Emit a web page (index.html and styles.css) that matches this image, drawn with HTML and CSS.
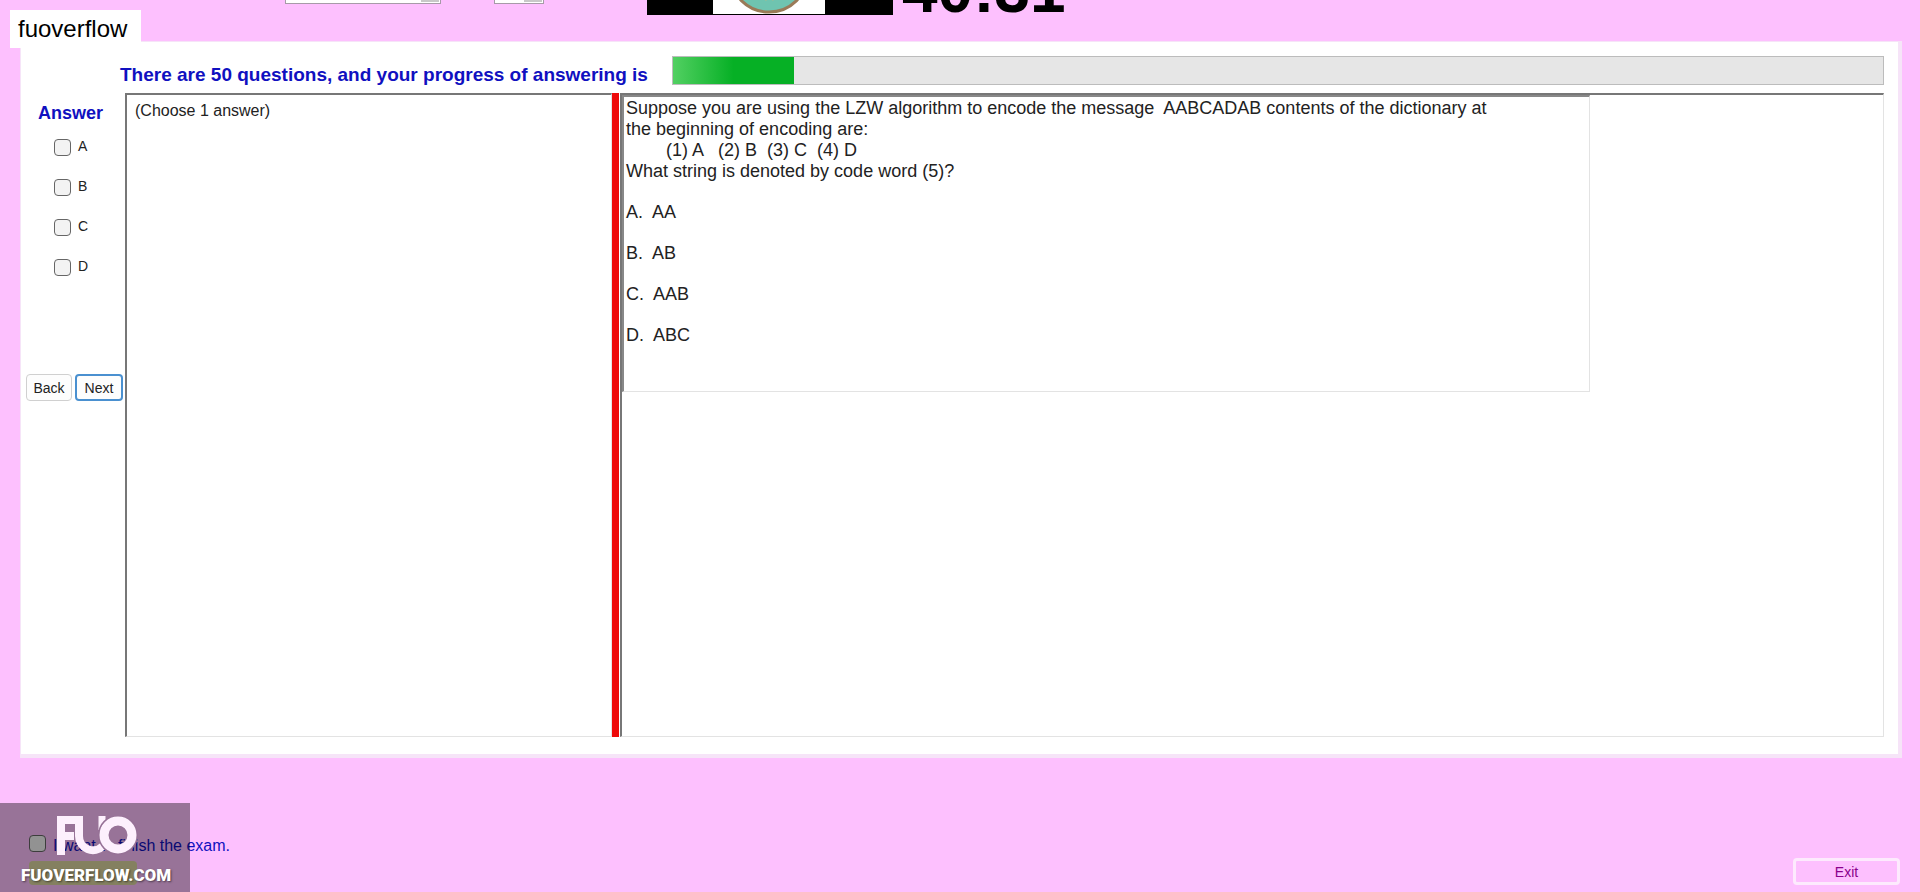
FILE: index.html
```html
<!DOCTYPE html>
<html lang="en">
<head>
  <meta charset="UTF-8">
  <meta name="viewport" content="width=device-width, initial-scale=1.0">
  <title>fuoverflow</title>
  <link rel="stylesheet" href="styles.css">
</head>
<body>

  <!-- Top bar, scrolled mostly out of view -->
  <header class="topbar">
    <select class="font-select" aria-label="Font"><option></option></select>
    <select class="size-select" aria-label="Size"><option></option></select>
    <div class="banner">
      <svg class="banner-seal" viewBox="0 0 112 63" aria-hidden="true">
        <rect width="112" height="63" fill="#fff"/>
        <circle cx="56" cy="22" r="39" fill="#6fc4b0" stroke="#9a7a58" stroke-width="3"/>
        <path d="M48 45l5 5 3-4 4 4 4-6z" fill="#a9b98c"/>
      </svg>
    </div>
    <div class="timer">40:31</div>
  </header>

  <div class="tag">fuoverflow</div>

  <!-- Exam panel -->
  <main class="panel">
    <div class="progress-row">
      <span class="progress-label">There are 50 questions, and your progress of answering is</span>
      <div class="progress"><div class="progress-fill" style="width: 10%"></div></div>
    </div>

    <div class="exam">
      <div class="answers">
        <h2>Answer</h2>
        <label><input type="checkbox">A</label>
        <label><input type="checkbox">B</label>
        <label><input type="checkbox">C</label>
        <label><input type="checkbox">D</label>
        <div class="nav-buttons">
          <button type="button">Back</button>
          <button type="button" class="next">Next</button>
        </div>
      </div>

      <div class="note-pane">(Choose 1 answer)</div>
      <div class="splitter"></div>

      <div class="question-pane">
        <div class="question">
          <p>Suppose you are using the LZW algorithm to encode the message  AABCADAB contents of the dictionary at
the beginning of encoding are:
        (1) A   (2) B  (3) C  (4) D
What string is denoted by code word (5)?</p>
          <p class="option">A.  AA</p>
          <p class="option">B.  AB</p>
          <p class="option">C.  AAB</p>
          <p class="option">D.  ABC</p>
        </div>
      </div>
    </div>
  </main>

  <footer class="footer">
    <div class="finish">
      <label><input type="checkbox">I want to finish the exam.</label>
      <button type="button" class="finish-button" aria-label="Finish"></button>
    </div>
    <button type="button" class="exit">Exit</button>
  </footer>

  <!-- Watermark -->
  <div class="watermark">
    <svg class="logo" viewBox="0 0 82 40" aria-hidden="true">
      <g fill="none" stroke="#fdf0fd">
        <path d="M5 39V4H19M5 20H18" stroke-width="8"/>
        <path d="M23 0V20a14 14 0 0 0 24 10" stroke-width="8"/>
        <path d="M46 0V14" stroke-width="7"/>
        <circle cx="62" cy="19" r="19" stroke="#967196" stroke-width="2"/>
        <circle cx="62" cy="19" r="14" stroke-width="9"/>
      </g>
    </svg>
    <div class="site">FUOVERFLOW.COM</div>
  </div>

</body>
</html>
```

FILE: styles.css
```css
* {
  box-sizing: border-box;
}
body {
  margin: 0;
  height: 100vh;
  display: flex;
  flex-direction: column;
  overflow: hidden;
  background-color: #fdc0fe;
  color: #222;
  font-family: "Liberation Sans", Arial, sans-serif;
  font-size: 16px;
}
button, select {
  font-family: inherit;
}

/* Top bar */
.topbar {
  height: 41px;
  padding-left: 285px;
  padding-bottom: 26px;
  display: flex;
  align-items: flex-end;
}
.font-select, .size-select {
  appearance: none;
  height: 24px;
  margin-bottom: 11px;
  border: 1px solid #a79aa8;
  border-radius: 0;
  background: linear-gradient(#c8c8c8, #c8c8c8) right 1px top 0 / 18px 21px no-repeat #fff;
}
.font-select {
  width: 156px;
  margin-right: 53px;
}
.size-select {
  width: 50px;
  margin-right: 103px;
}
.banner {
  width: 246px;
  height: 64px;
  flex: none;
  padding-right: 2px;
  display: flex;
  justify-content: center;
  background-color: #000;
}
.banner-seal {
  width: 112px;
  height: 63px;
}
.timer {
  margin-left: 9px;
  color: #000;
  font-size: 64px;
  font-weight: bold;
  line-height: 50px;
}

/* Name tag */
.tag {
  position: absolute;
  left: 10px;
  top: 10px;
  padding: 5px 14px 5px 8px;
  background-color: #fff;
  color: #000;
  font-size: 24px;
  line-height: 28px;
}

/* Exam panel */
.panel {
  flex: 1;
  min-height: 0;
  margin: 0 18px 0 20px;
  padding: 14px 14px 17px 5px;
  display: flex;
  flex-direction: column;
  gap: 8px;
  background-color: #fff;
  border: 1px solid #f6e4f8;
  border-right-width: 4px;
  border-bottom-width: 4px;
}
.progress-row {
  display: flex;
  gap: 24px;
  padding-left: 94px;
}
.progress-label {
  padding-top: 8px;
  color: #1010c0;
  font-size: 19px;
  font-weight: bold;
  line-height: 21px;
  white-space: nowrap;
}
.progress {
  flex: 1;
  height: 29px;
  border: 1px solid #bcbcbc;
  background-color: #e6e6e6;
}
.progress-fill {
  height: 100%;
  background: linear-gradient(to right, #52d062, #06b025 50%);
}

.exam {
  flex: 1;
  min-height: 0;
  display: flex;
}

/* Answer column */
.answers {
  width: 99px;
  padding-right: 2px;
  display: flex;
  flex-direction: column;
}
.answers h2 {
  margin: 9px 0 12px;
  padding-left: 12px;
  color: #1010c0;
  font-size: 18px;
  line-height: 22px;
}
.answers label {
  height: 40px;
  padding-left: 28px;
  display: flex;
  align-items: flex-start;
  gap: 7px;
  font-size: 14px;
  line-height: 21px;
}
input[type="checkbox"] {
  appearance: none;
  flex: none;
  width: 17px;
  height: 17px;
  margin: 3px 0 0;
  border: 1px solid #666;
  border-radius: 4px;
  background-color: #f3f3f3;
}
.nav-buttons {
  display: flex;
  gap: 3px;
  margin-top: 78px;
}
.nav-buttons button {
  flex: 1;
  height: 27px;
  padding: 0;
  border: 1px solid #d0d0d0;
  border-radius: 4px;
  background-color: #fdfdfd;
  color: #222;
  font-size: 14px;
}
.nav-buttons .next {
  border: 2px solid #4a90d0;
}

/* Panes */
.note-pane {
  width: 487px;
  padding: 6px 8px;
  border: 1px solid #e3e3e3;
  border-top: 2px solid #777;
  border-left: 2px solid #777;
  font-size: 16px;
  line-height: 20px;
}
.splitter {
  width: 7px;
  background-color: #ee0a0a;
}
.question-pane {
  flex: 1;
  margin-left: 1px;
  border: 1px solid #e3e3e3;
  border-top: 2px solid #777;
  border-left: 2px solid #777;
}
.question {
  max-width: 968px;
  height: 297px;
  padding: 1px 2px;
  border: 1px solid #e3e3e3;
  border-top: 2px solid #888;
  border-left: 2px solid #888;
  font-size: 18px;
  line-height: 21px;
}
.question p {
  margin: 0;
  white-space: pre-wrap;
}
.question .option {
  padding-top: 20px;
}

/* Footer */
.footer {
  height: 134px;
  padding: 0 20px 7px 29px;
  display: flex;
  justify-content: space-between;
  align-items: flex-end;
}
.finish {
  display: flex;
  flex-direction: column;
  gap: 4px;
}
.finish label {
  display: flex;
  gap: 7px;
  color: #1010c0;
  font-size: 16px;
  line-height: 22px;
}
.finish input[type="checkbox"] {
  margin-top: 0;
}
.finish-button {
  width: 108px;
  height: 24px;
  border: 0;
  border-radius: 4px;
  background-color: #dcd6a0;
}
.exit {
  width: 107px;
  height: 27px;
  border: 3px solid #fdeafd;
  border-radius: 4px;
  background-color: #fdc0fe;
  color: #8b008b;
  font-size: 14px;
  line-height: 14px;
}

/* Watermark */
.watermark {
  position: absolute;
  left: 0;
  bottom: 0;
  width: 190px;
  height: 89px;
  padding: 13px 0 0 21px;
  background-color: rgba(0, 0, 0, 0.4);
}
.logo {
  display: block;
  width: 82px;
  height: 40px;
  margin-left: 35px;
}
.site {
  margin-top: 8px;
  color: #fff;
  font-family: Roboto, "Liberation Sans", sans-serif;
  font-size: 17px;
  font-weight: 900;
  line-height: 22px;
  text-shadow: 1px 1px 2px rgba(0, 0, 0, 0.5);
}
```
